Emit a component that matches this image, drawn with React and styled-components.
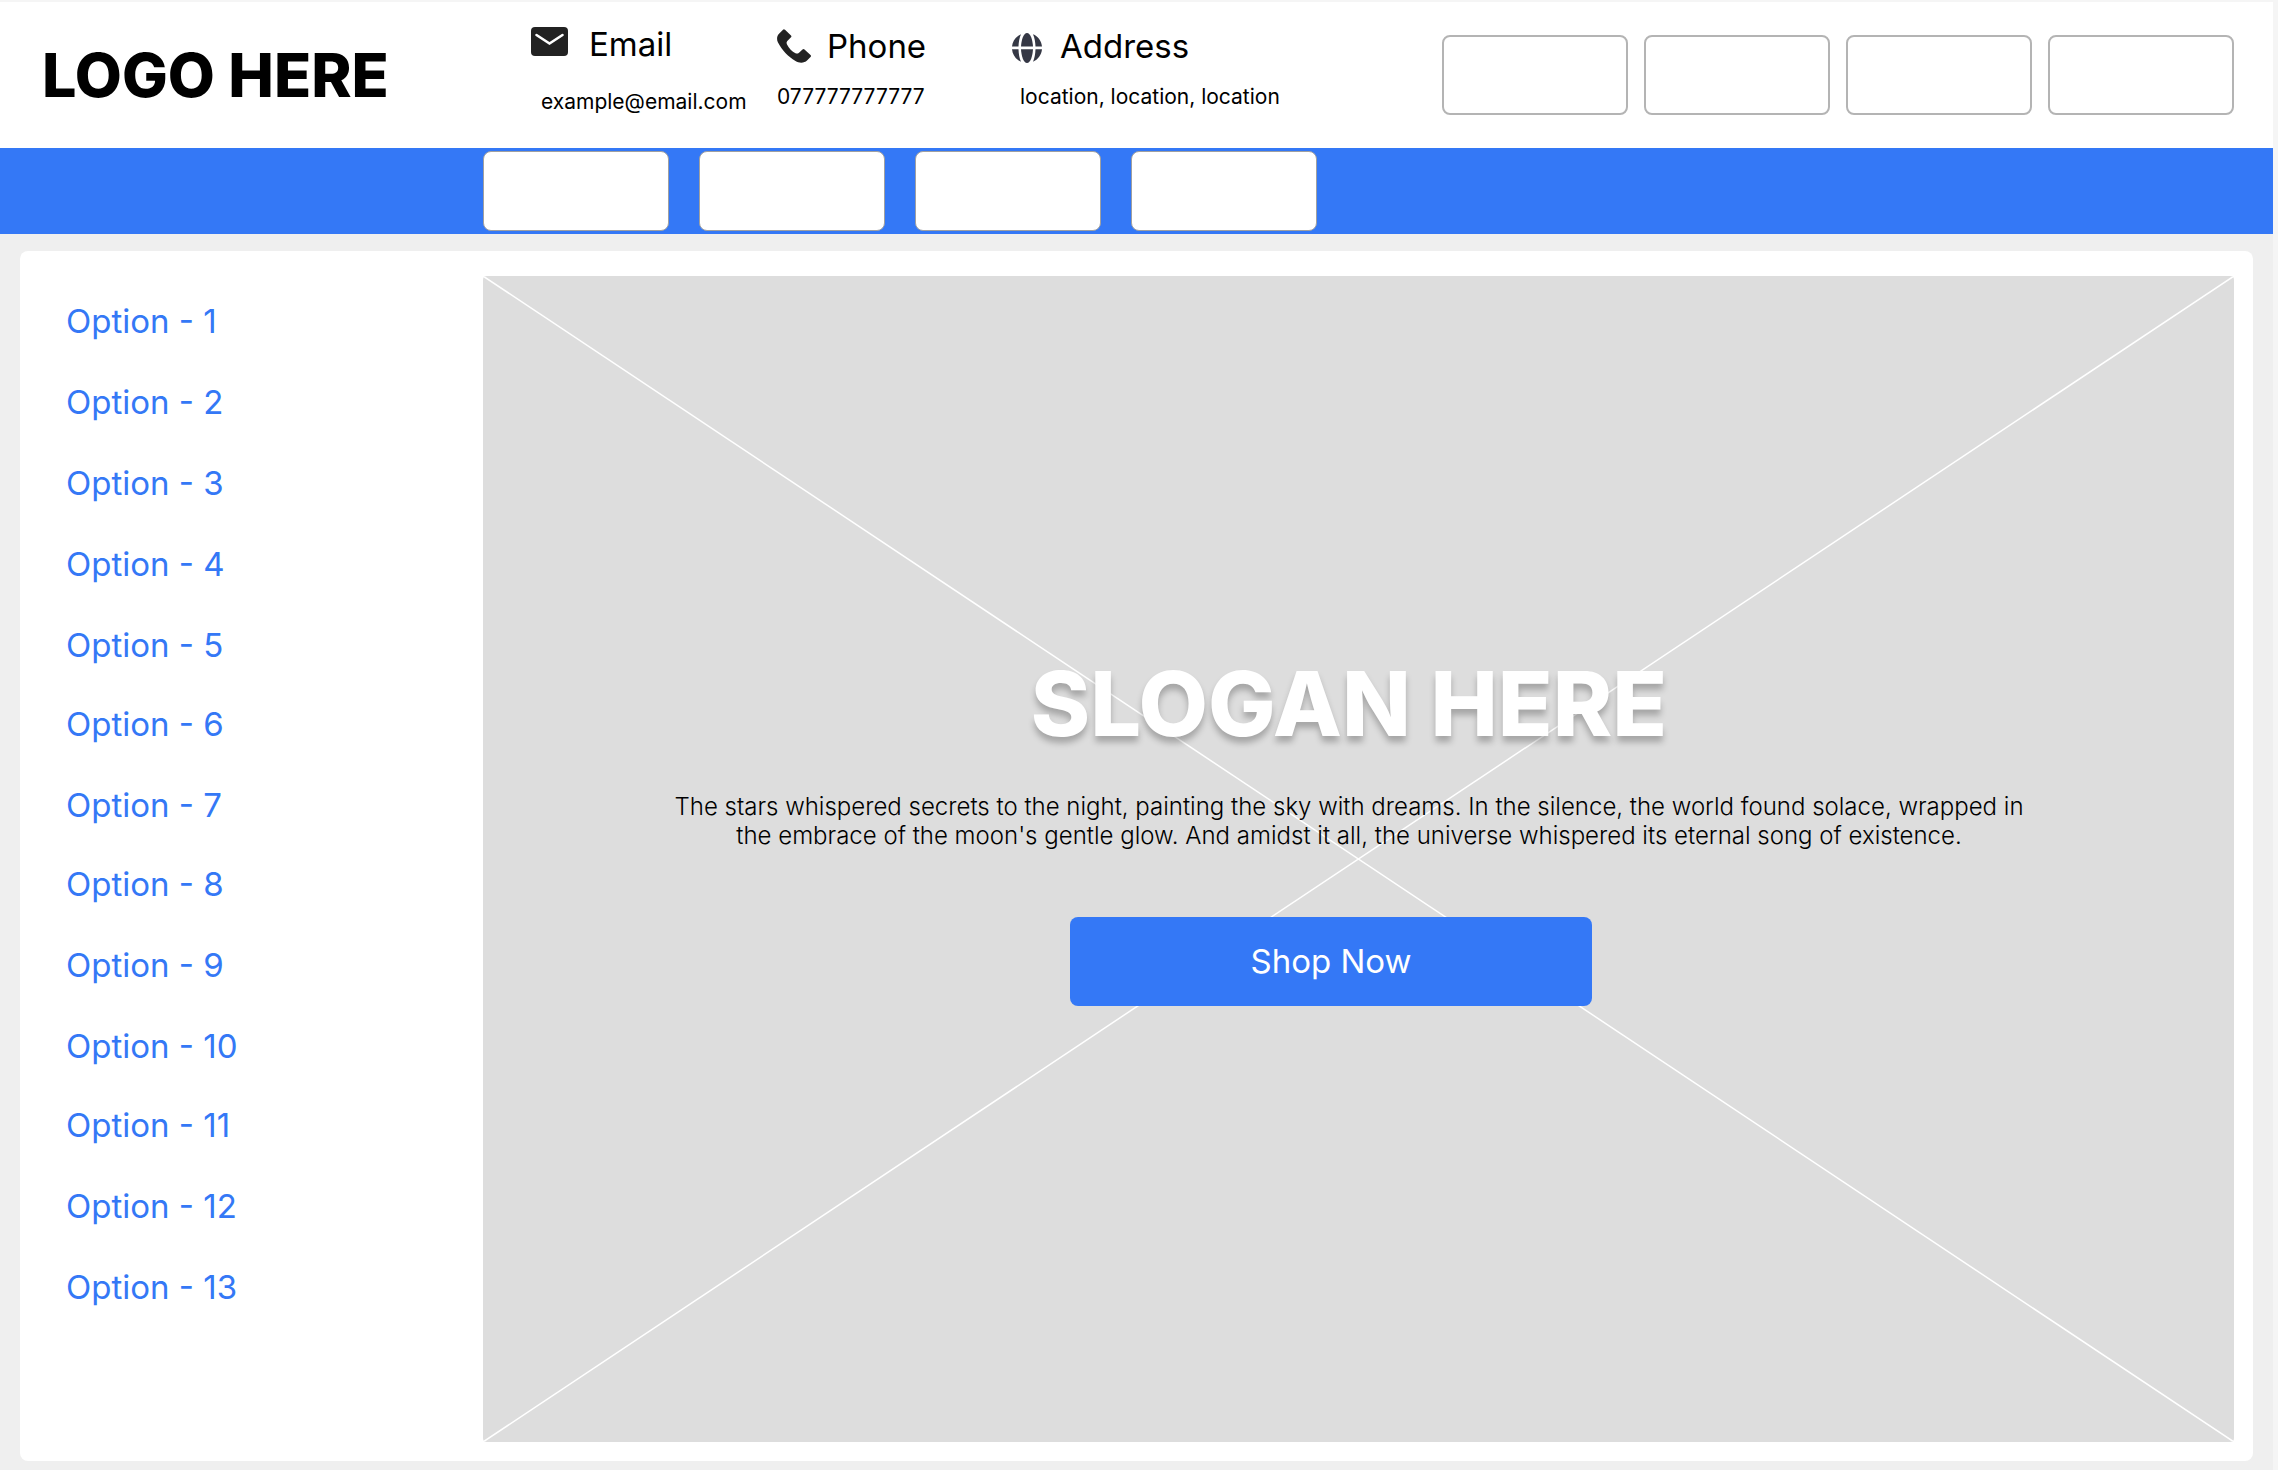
import React from "react";
import styled, { createGlobalStyle } from "styled-components";

const blue = "#3478f6";

const GlobalStyle = createGlobalStyle`
  * { box-sizing: border-box; }
  body {
    margin: 0;
    background: #f5f5f5;
    color: #000;
    font-family: Inter, "Liberation Sans", sans-serif;
  }
  h1, p, ul { margin: 0; padding: 0; }
  ul { list-style: none; }
  a { color: inherit; text-decoration: none; }
  button { font: inherit; cursor: pointer; }
`;

const Page = styled.div`
  display: flex;
  flex-direction: column;
  min-height: 100vh;
  padding: 2px 5px 0 0;
`;

const Header = styled.header`
  display: flex;
  align-items: flex-start;
  height: 146px;
  padding-right: 39px;
  background: #fff;
`;

const Logo = styled.a`
  flex: 0 0 531px;
  padding: 37px 0 0 42px;
  font-size: 61px;
  line-height: 72px;
  font-weight: 800;
`;

const Contacts = styled.address`
  display: flex;
  flex: 1;
  font-style: normal;
`;

const Contact = styled.div`
  display: flex;
  flex-direction: column;
  flex: 0 0 ${(p) => p.$width}px;
  gap: ${(p) => p.$gap}px;
  padding-top: ${(p) => p.$top}px;
`;

const ContactTitle = styled.div`
  display: flex;
  align-items: center;
  gap: ${(p) => p.$gap}px;
  font-size: 33px;
  line-height: 40px;

  svg { flex: none; display: block; }
`;

const ContactValue = styled.a`
  padding-left: ${(p) => p.$indent || 0}px;
  font-size: 21px;
  line-height: 26px;
  white-space: nowrap;
`;

const Actions = styled.div`
  display: flex;
  gap: 16px;
  padding-top: 33px;
`;

const Nav = styled.nav`
  display: flex;
  gap: 30px;
  padding: 3px 0 3px 483px;
  background: ${blue};
`;

const BoxButton = styled.button`
  width: 186px;
  height: 80px;
  padding: 0;
  background: #fff;
  border: ${(p) => (p.$outlined ? "2px solid #b4b4b4" : "1px solid #a0a0a0")};
  border-radius: 8px;
`;

const Body = styled.main`
  display: flex;
  flex: 1;
  padding: 17px 20px 9px;
  background: #efefef;
`;

const Panel = styled.div`
  display: flex;
  flex: 1;
  padding: 25px 19px 19px 0;
  background: #fff;
  border-radius: 8px;
`;

const Sidebar = styled.nav`
  display: flex;
  flex-direction: column;
  gap: 40px;
  flex: 0 0 463px;
  padding: 26px 0 0 46px;
`;

const OptionGroup = styled.ul`
  display: flex;
  flex-direction: column;
  gap: 42px;
`;

const Option = styled.li`
  color: ${blue};
  font-size: 33px;
  line-height: 39px;
`;

const Hero = styled.section`
  position: relative;
  display: flex;
  flex: 1;
  flex-direction: column;
  align-items: center;
  justify-content: center;
  padding: 0 19px 64px 0;
  overflow: hidden;
  background: #ddd;
  border-radius: 4px;
`;

const Cross = styled.svg`
  position: absolute;
  inset: 0;
  width: 100%;
  height: 100%;
`;

const Slogan = styled.h1`
  position: relative;
  color: #fff;
  font-size: 90px;
  line-height: 109px;
  font-weight: 800;
  text-shadow: 0 6px 6px rgba(0, 0, 0, 0.25);
`;

const Lead = styled.p`
  position: relative;
  max-width: 1376px;
  margin-top: 34px;
  font-size: 24px;
  line-height: 29px;
  font-weight: 300;
  text-align: center;
`;

const ShopButton = styled.button`
  position: relative;
  width: 522px;
  height: 89px;
  margin: 67px 36px 0 0;
  color: #fff;
  font-size: 33px;
  background: ${blue};
  border: 0;
  border-radius: 8px;
`;

const MailIcon = () => (
  <svg width="38" height="34" viewBox="0 0 38 34" aria-hidden="true">
    <rect x="0" y="0" width="37" height="29" rx="4" fill="#222" />
    <path d="M5.5 8 18.5 16.5 31.5 8" fill="none" stroke="#fff" strokeWidth="2.6" strokeLinecap="round" strokeLinejoin="miter" />
  </svg>
);

const PhoneIcon = () => (
  <svg width="34" height="34" viewBox="0 0 34 34" aria-hidden="true">
    <path
      fill="#222"
      d="M6 .7Q7 0 8 .8L14 6.600Q14.800 7.500 14 8.300L10.300 12Q9 13.500 10 15.500C12 19.500 15 22.500 18.500 24.300Q20.500 25 22 23.700L25.500 20.500Q26.500 19.600 27.500 20.500L33.500 26Q34.500 27 33.500 28L30 31.500C27.500 34.200 22 34.300 18.500 32C11 27.500 5 21 1 13.500C-.5 10.500-.2 7 2 4.700Z"
    />
  </svg>
);

const GlobeIcon = () => (
  <svg width="30" height="34" viewBox="0 -3 30 34" fill="#353845" aria-hidden="true">
    <path d="M9 14.500C9.400 8 11.500 1 15 1S20.600 8 21 14.500Z" />
    <path d="M9 17.200C9.400 24 11.500 31 15 31S20.600 24 21 17.200Z" />
    <path d="M0 14.500C.5 9 4 4.300 9 2.300C7.400 6 6.700 10 6.500 14.500Z" />
    <path d="M30 14.500C29.500 9 26 4.300 21 2.300C22.600 6 23.300 10 23.500 14.500Z" />
    <path d="M0 17.200C.5 22.800 4 27.500 9 29.700C7.400 26 6.700 22 6.500 17.200Z" />
    <path d="M30 17.200C29.500 22.800 26 27.500 21 29.700C22.600 26 23.300 22 23.500 17.200Z" />
  </svg>
);

const slots = [1, 2, 3, 4];
const optionGroups = [[1, 2, 3, 4, 5], [6, 7], [8, 9, 10], [11, 12, 13]];

export default function App() {
  return (
    <Page>
      <GlobalStyle />
      <Header>
        <Logo href="#">LOGO HERE</Logo>
        <Contacts>
          <Contact $width={246} $top={22} $gap={25}>
            <ContactTitle $gap={20}><MailIcon />Email</ContactTitle>
            <ContactValue $indent={10} href="#email">example@email.com</ContactValue>
          </Contact>
          <Contact $width={235} $top={24} $gap={18}>
            <ContactTitle $gap={16}><PhoneIcon />Phone</ContactTitle>
            <ContactValue href="#phone">077777777777</ContactValue>
          </Contact>
          <Contact $width={280} $top={24} $gap={18}>
            <ContactTitle $gap={18}><GlobeIcon />Address</ContactTitle>
            <ContactValue $indent={8} href="#address">location, location, location</ContactValue>
          </Contact>
        </Contacts>
        <Actions>
          {slots.map((n) => <BoxButton key={n} type="button" $outlined />)}
        </Actions>
      </Header>
      <Nav>
        {slots.map((n) => <BoxButton key={n} type="button" />)}
      </Nav>
      <Body>
        <Panel>
          <Sidebar>
            {optionGroups.map((group) => (
              <OptionGroup key={group[0]}>
                {group.map((n) => (
                  <Option key={n}><a href={`#option-${n}`}>{`Option - ${n}`}</a></Option>
                ))}
              </OptionGroup>
            ))}
          </Sidebar>
          <Hero>
            <Cross aria-hidden="true" stroke="#fff" strokeWidth="1.5">
              <line x1="0" y1="0" x2="100%" y2="100%" />
              <line x1="100%" y1="0" x2="0" y2="100%" />
            </Cross>
            <Slogan>SLOGAN HERE</Slogan>
            <Lead>
              The stars whispered secrets to the night, painting the sky with dreams. In the silence, the world found
              solace, wrapped in the embrace of the moon's gentle glow. And amidst it all, the universe whispered its
              eternal song of existence.
            </Lead>
            <ShopButton type="button">Shop Now</ShopButton>
          </Hero>
        </Panel>
      </Body>
    </Page>
  );
}
